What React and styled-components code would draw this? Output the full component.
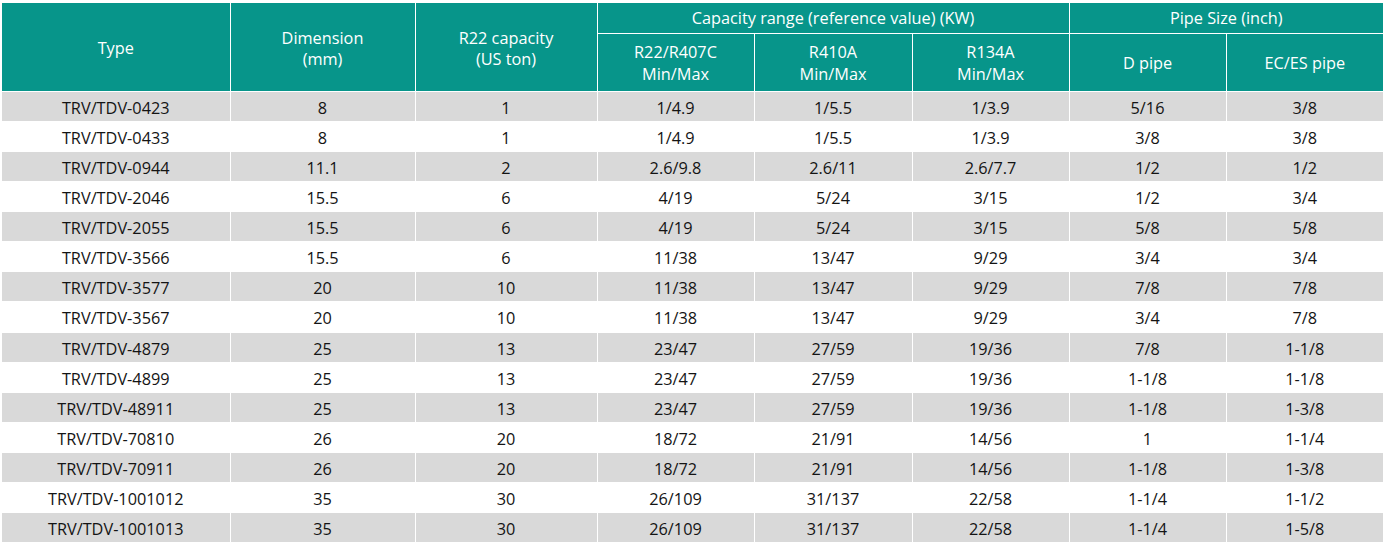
import React from "react";
import styled, { createGlobalStyle } from "styled-components";

const GlobalStyle = createGlobalStyle`
  html, body {
    margin: 0;
    padding: 0;
    background: #ffffff;
  }
  body {
    font-family: "Open Sans", "Liberation Sans", sans-serif;
  }
`;

const Page = styled.div`
  padding: 3px 4px 0 2px;
`;

const Table = styled.table`
  width: 1381px;
  border-collapse: collapse;
  table-layout: fixed;
  font-family: "Open Sans", "Liberation Sans", sans-serif;
  font-size: 16.3px;
`;

const HeadCell = styled.th`
  box-sizing: border-box;
  background: #07958a;
  color: #ffffff;
  font-weight: 400;
  text-align: center;
  vertical-align: middle;
  border: 1px solid #ffffff;
  border-top: none;
  line-height: 21.7px;
  padding: ${(p) => (p.$top ? "5px 4px 0" : "3px 4px 0")};
  height: ${(p) => p.$h || "auto"};
  &:first-child {
    border-left: none;
  }
  &:last-child {
    border-right: none;
  }
`;

const Row = styled.tr`
  background: ${(p) => (p.$shade ? "#d9d9d9" : "#ffffff")};
`;

const Cell = styled.td`
  box-sizing: border-box;
  color: #141414;
  text-align: center;
  vertical-align: middle;
  border: 1px solid #ffffff;
  height: 30.13px;
  padding: 3px 4px 0;
  line-height: 22px;
  &:first-child {
    border-left: none;
  }
  &:last-child {
    border-right: none;
  }
`;

const widths = [228, 185, 182, 157, 158, 157, 157, 157];

const rows = [
  ["TRV/TDV-0423", "8", "1", "1/4.9", "1/5.5", "1/3.9", "5/16", "3/8"],
  ["TRV/TDV-0433", "8", "1", "1/4.9", "1/5.5", "1/3.9", "3/8", "3/8"],
  ["TRV/TDV-0944", "11.1", "2", "2.6/9.8", "2.6/11", "2.6/7.7", "1/2", "1/2"],
  ["TRV/TDV-2046", "15.5", "6", "4/19", "5/24", "3/15", "1/2", "3/4"],
  ["TRV/TDV-2055", "15.5", "6", "4/19", "5/24", "3/15", "5/8", "5/8"],
  ["TRV/TDV-3566", "15.5", "6", "11/38", "13/47", "9/29", "3/4", "3/4"],
  ["TRV/TDV-3577", "20", "10", "11/38", "13/47", "9/29", "7/8", "7/8"],
  ["TRV/TDV-3567", "20", "10", "11/38", "13/47", "9/29", "3/4", "7/8"],
  ["TRV/TDV-4879", "25", "13", "23/47", "27/59", "19/36", "7/8", "1-1/8"],
  ["TRV/TDV-4899", "25", "13", "23/47", "27/59", "19/36", "1-1/8", "1-1/8"],
  ["TRV/TDV-48911", "25", "13", "23/47", "27/59", "19/36", "1-1/8", "1-3/8"],
  ["TRV/TDV-70810", "26", "20", "18/72", "21/91", "14/56", "1", "1-1/4"],
  ["TRV/TDV-70911", "26", "20", "18/72", "21/91", "14/56", "1-1/8", "1-3/8"],
  ["TRV/TDV-1001012", "35", "30", "26/109", "31/137", "22/58", "1-1/4", "1-1/2"],
  ["TRV/TDV-1001013", "35", "30", "26/109", "31/137", "22/58", "1-1/4", "1-5/8"],
];

export default function App() {
  return (
    <Page>
      <GlobalStyle />
      <Table>
        <colgroup>
          {widths.map((w, i) => (
            <col key={i} style={{ width: w }} />
          ))}
        </colgroup>
        <thead>
          <tr>
            <HeadCell rowSpan={2} $top>Type</HeadCell>
            <HeadCell rowSpan={2} $top>
              Dimension
              <br />
              (mm)
            </HeadCell>
            <HeadCell rowSpan={2} $top>
              R22 capacity
              <br />
              (US ton)
            </HeadCell>
            <HeadCell colSpan={3} $h="30px">
              Capacity range (reference value) (KW)
            </HeadCell>
            <HeadCell colSpan={2} $h="30px">
              Pipe Size (inch)
            </HeadCell>
          </tr>
          <tr>
            <HeadCell $h="58px">
              R22/R407C
              <br />
              Min/Max
            </HeadCell>
            <HeadCell $h="58px">
              R410A
              <br />
              Min/Max
            </HeadCell>
            <HeadCell $h="58px">
              R134A
              <br />
              Min/Max
            </HeadCell>
            <HeadCell $h="58px">D pipe</HeadCell>
            <HeadCell $h="58px">EC/ES pipe</HeadCell>
          </tr>
        </thead>
        <tbody>
          {rows.map((r, i) => (
            <Row key={i} $shade={i % 2 === 0}>
              {r.map((c, j) => (
                <Cell key={j}>{c}</Cell>
              ))}
            </Row>
          ))}
        </tbody>
      </Table>
    </Page>
  );
}
